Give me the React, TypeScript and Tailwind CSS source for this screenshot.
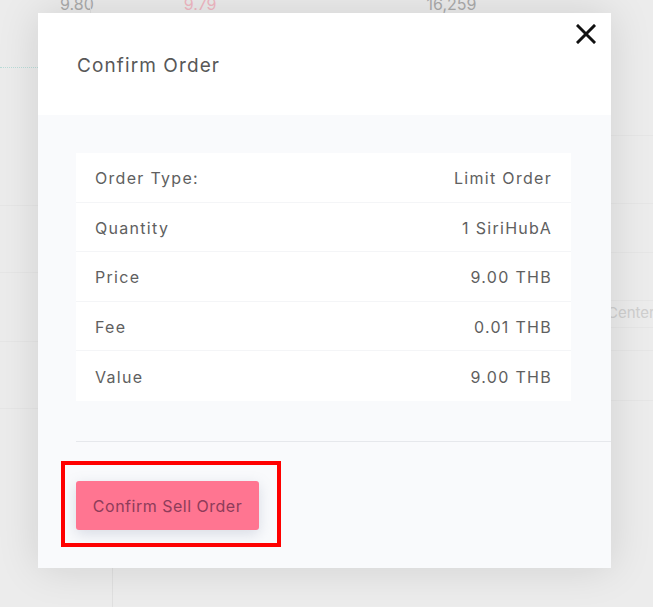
import React from "react";

const rows: [string, string][] = [
  ["Order Type:", "Limit Order"],
  ["Quantity", "1 SiriHubA"],
  ["Price", "9.00 THB"],
  ["Fee", "0.01 THB"],
  ["Value", "9.00 THB"],
];

export default function App() {
  return (
    <div
      className="relative w-[653px] h-[607px] overflow-hidden bg-[#ececec]"
      style={{ fontFamily: "Inter, 'Noto Sans', sans-serif" }}
    >
      {/* background page content */}
      <div className="absolute left-0 top-[-6px] w-full h-[20px] flex items-center text-[16px] text-[#ababab]">
        <span className="ml-[60px]">9.80</span>
        <span className="ml-[90px] text-[#f1b8c3]">9.79</span>
        <span className="ml-[210px]">16,259</span>
      </div>
      <div className="absolute left-[90px] top-0 w-px h-[13px] bg-[#e0e0e0]" />
      <div className="absolute left-[112px] top-[568px] w-px h-[40px] bg-[#e0e0e0]" />
      <div className="absolute left-0 top-[67px] w-[38px] border-t border-dotted border-[#b9dcd8]" />
      {[205, 272, 341, 408].map((y) => (
        <div key={y} className="absolute left-0 w-[38px] h-px bg-[#e6e6e6]" style={{ top: y }} />
      ))}
      {[135, 203, 252, 300, 327, 350, 400].map((y) => (
        <div key={y} className="absolute left-[611px] w-[42px] h-px bg-[#e6e6e6]" style={{ top: y }} />
      ))}
      <div className="absolute left-[607px] top-[302px] text-[15px] text-[#cfcfcf]">Center</div>

      {/* modal */}
      <div className="absolute left-[38px] top-[13px] w-[573px] h-[555px] flex flex-col bg-[#f9fafc] shadow-[0_0_40px_rgba(0,0,0,0.12)]">
        <div className="relative h-[102px] bg-white flex items-center pl-[39px] pt-[4px]">
          <span className="text-[19px] text-[#585858] tracking-[1.1px]">Confirm Order</span>
          <svg
            className="absolute right-[15px] top-[11px]"
            width="20"
            height="20"
            viewBox="0 0 20 20"
          >
            <path d="M2 2 L18 18 M18 2 L2 18" stroke="#111" strokeWidth="3" strokeLinecap="square" />
          </svg>
        </div>
        <div className="flex flex-col pt-[38px] pl-[38px]">
          <div className="mr-[40px] bg-white flex flex-col">
            {rows.map(([k, v], i) => (
              <div
                key={k}
                className={`h-[49.6px] flex items-center justify-between px-[19px] pt-[2px] text-[16px] text-[#606060] tracking-[1.3px] ${
                  i < rows.length - 1 ? "border-b border-[#f4f5f7]" : ""
                }`}
              >
                <span>{k}</span>
                <span>{v}</span>
              </div>
            ))}
          </div>
          <div className="mt-[40px] h-px bg-[#e6e8ec]" />
          <div className="mt-[19px] -ml-[15px] w-[220px] h-[86px] border-[4px] border-[#ff0000] pl-[11px] pt-[16px]">
            <button className="w-[183px] h-[49px] pt-[2px] rounded-[3px] bg-[#ff7591] text-[16px] text-[#8e3c5a] tracking-[0.5px] shadow-[0_4px_14px_rgba(120,130,160,0.25)]">
              Confirm Sell Order
            </button>
          </div>
        </div>
      </div>
    </div>
  );
}
